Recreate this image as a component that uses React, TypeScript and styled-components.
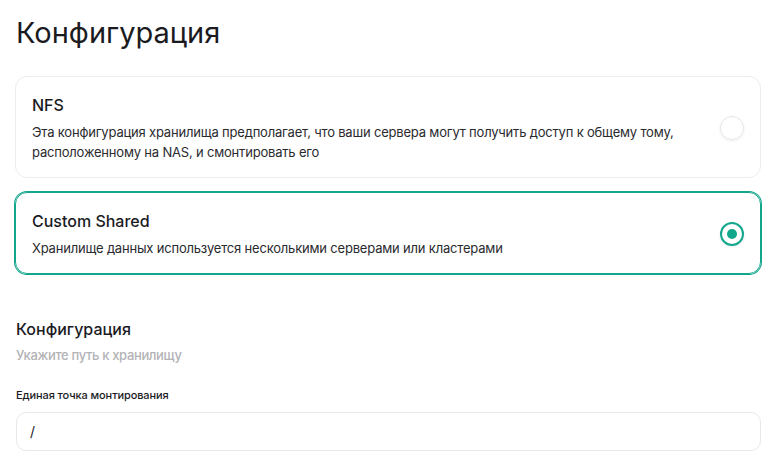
import React from 'react';
import styled, { createGlobalStyle } from 'styled-components';

const GlobalStyle = createGlobalStyle`
  * { box-sizing: border-box; }
  body {
    margin: 0;
    background: #ffffff;
    font-family: Inter, 'Noto Sans', sans-serif;
    color: #1b1b1f;
  }
`;

const Page = styled.main`
  padding: 15px 17px 0 15px;
  display: flex;
  flex-direction: column;
`;

const Title = styled.h1`
  margin: 0 0 25px 1px;
  font-size: 29px;
  line-height: 36px;
  font-weight: 400;
`;

const Options = styled.div`
  display: flex;
  flex-direction: column;
  gap: 14px;
`;

const Card = styled.label<{ $active?: boolean }>`
  display: flex;
  align-items: center;
  gap: 16px;
  border-radius: 12px;
  cursor: pointer;
  padding: 17px 16px 15px 16px;
  border: 1px solid ${p => (p.$active ? '#12a68c' : '#ededed')};
  box-shadow: ${p => (p.$active ? '0 0 0 1px #12a68c' : 'none')};
`;

const CardBody = styled.div`
  flex: 1;
  display: flex;
  flex-direction: column;
  gap: 6px;
`;

const CardTitle = styled.div`
  font-size: 16px;
  line-height: 22px;
  font-weight: 500;
`;

const CardText = styled.div`
  font-size: 13px;
  line-height: 20px;
  letter-spacing: -0.19px;
  color: #2a2a2e;
`;

const Radio = styled.span<{ $checked?: boolean }>`
  flex: none;
  width: 24px;
  height: 24px;
  border-radius: 50%;
  display: flex;
  align-items: center;
  justify-content: center;
  border: ${p => (p.$checked ? '2px solid #12a68c' : '1px solid #e6e6e6')};
  box-shadow: 0 1px 3px rgba(0, 0, 0, 0.08);

  &::after {
    content: '';
    display: ${p => (p.$checked ? 'block' : 'none')};
    width: 10px;
    height: 10px;
    border-radius: 50%;
    background: #12a68c;
  }
`;

const Section = styled.section`
  margin-top: 43px;
  padding-left: 1px;
  display: flex;
  flex-direction: column;
`;

const SectionTitle = styled.h2`
  margin: 0;
  font-size: 16px;
  line-height: 24px;
  font-weight: 500;
`;

const SectionHint = styled.p`
  margin: 4px 0 0;
  font-size: 13px;
  line-height: 20px;
  font-weight: 500;
  letter-spacing: -0.35px;
  color: #b3b3b6;
`;

const FieldLabel = styled.div`
  margin-top: 22px;
  font-size: 11px;
  line-height: 16px;
  font-weight: 500;
  letter-spacing: -0.1px;
`;

const Input = styled.input`
  margin-top: 9px;
  height: 39px;
  width: 100%;
  border: 1px solid #e8e8ea;
  border-radius: 10px;
  padding: 0 13px;
  font-family: inherit;
  font-size: 14px;
  color: #1b1b1f;
  outline: none;
`;

const options = [
  {
    id: 'nfs',
    title: 'NFS',
    text: 'Эта конфигурация хранилища предполагает, что ваши сервера могут получить доступ к общему тому, расположенному на NAS, и смонтировать его',
  },
  {
    id: 'custom',
    title: 'Custom Shared',
    text: 'Хранилище данных используется несколькими серверами или кластерами',
  },
];

export default function App() {
  const [selected, setSelected] = React.useState('custom');
  const [path, setPath] = React.useState('/');

  return (
    <Page>
      <GlobalStyle />
      <Title>Конфигурация</Title>

      <Options>
        {options.map(o => (
          <Card key={o.id} $active={selected === o.id} onClick={() => setSelected(o.id)}>
            <CardBody>
              <CardTitle>{o.title}</CardTitle>
              <CardText>{o.text}</CardText>
            </CardBody>
            <Radio $checked={selected === o.id} />
          </Card>
        ))}
      </Options>

      <Section>
        <SectionTitle>Конфигурация</SectionTitle>
        <SectionHint>Укажите путь к хранилищу</SectionHint>
        <FieldLabel>Единая точка монтирования</FieldLabel>
        <Input value={path} onChange={e => setPath(e.target.value)} />
      </Section>
    </Page>
  );
}
